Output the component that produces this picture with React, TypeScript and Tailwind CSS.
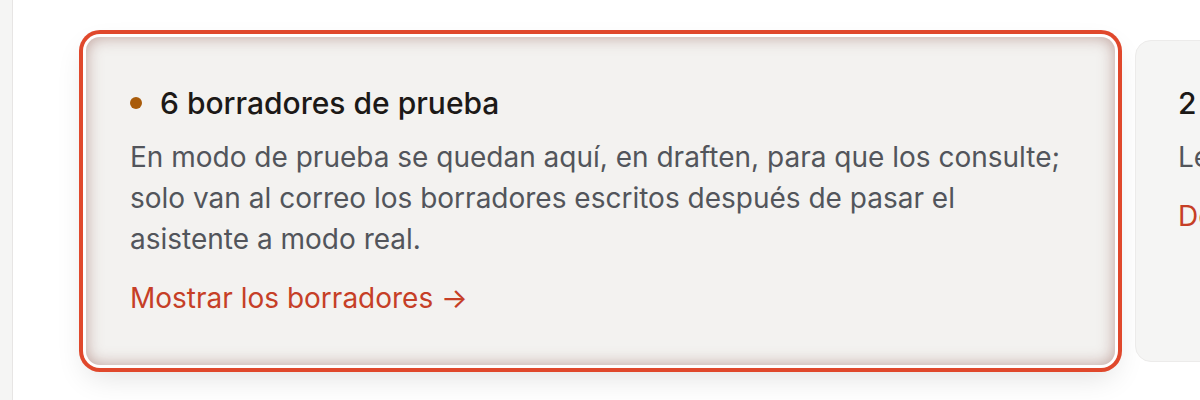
export default function App() {
  return (
    <div className="flex h-[400px] w-[1200px] overflow-hidden bg-white font-['Inter',sans-serif]">
      <aside className="w-[13px] shrink-0 border-r border-[#e7e5e4] bg-[#f5f5f4]" />

      <main className="flex flex-1 items-center gap-5 pb-[35px] pl-[73px] pt-[37px]">
        <DraftsCard />
        <SentCard />
      </main>
    </div>
  );
}

function DraftsCard() {
  return (
    <section className="h-[328px] w-[1029px] shrink-0 rounded-[14px] bg-[#f3f2f0] px-[44px] pt-[48px] shadow-[inset_0_0_16px_rgba(140,80,70,0.5),0_0_0_3px_#ffffff,0_0_0_7px_#e0482c,0_12px_30px_rgba(0,0,0,0.12)]">
      <h2 className="flex items-center gap-[18px] text-[30px] font-medium leading-[36px] text-[#1c1917]">
        <span className="h-[12px] w-[12px] shrink-0 rounded-full bg-[#a95c0b]" />
        6 borradores de prueba
      </h2>
      <p className="mt-4 max-w-[945px] text-[28px] leading-[41px] text-[#52555b]">
        En modo de prueba se quedan aquí, en draften, para que los consulte; solo van al correo los borradores escritos
        después de pasar el asistente a modo real.
      </p>
      <a className="mt-5 block text-[28px] leading-[36px] text-[#c63f27]" href="#">
        Mostrar los borradores →
      </a>
    </section>
  );
}

function SentCard() {
  return (
    <section className="h-[322px] w-[400px] shrink-0 rounded-[16px] border border-[#ecebea] bg-[#f5f5f4] px-[42px] pt-[44px]">
      <h2 className="whitespace-nowrap text-[30px] font-medium leading-[36px] text-[#1c1917]">2 enviados</h2>
      <p className="mt-4 whitespace-nowrap text-[28px] leading-[41px] text-[#52555b]">Les llegaron ayer.</p>
      <a className="mt-5 block whitespace-nowrap text-[28px] leading-[36px] text-[#c63f27]" href="#">
        Deshacer →
      </a>
    </section>
  );
}
